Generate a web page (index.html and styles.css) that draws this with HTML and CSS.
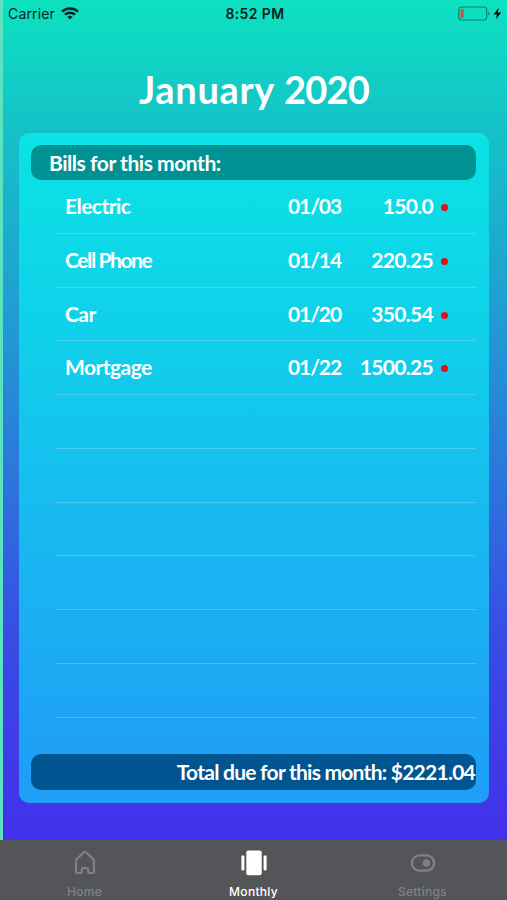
FILE: index.html
```html
<!DOCTYPE html>
<html lang="en">
<head>
    <meta charset="UTF-8">
    <meta name="viewport" content="width=device-width, initial-scale=1.0">
    <title>Monthly Bills</title>
    <link rel="stylesheet" href="styles.css">
</head>
<body>
    <div class="screen">
        <!-- Status bar -->
        <div class="status-bar">
            <div class="carrier">
                <span>Carrier</span>
                <svg width="18" height="13" viewBox="0 0 18 13" fill="none" stroke="#07251f" stroke-width="2.4">
                    <path d="M1 4.6C5.5 .4 12.5 .4 17 4.6"/>
                    <path d="M3.9 7.7C6.8 5 11.2 5 14.1 7.7"/>
                    <path d="M6.3 9.8C7.9 8.4 10.1 8.4 11.7 9.8L9 12.6Z" fill="#07251f" stroke="none"/>
                </svg>
            </div>
            <div class="time">8:52 PM</div>
            <div class="battery">
                <svg width="44" height="15" viewBox="0 0 44 15">
                    <rect x=".7" y="1" width="28" height="13" rx="3.2" fill="none" stroke="#087f72" stroke-width="1.2"/>
                    <rect x="2.6" y="3" width="3" height="9" rx=".8" fill="#d44e3c"/>
                    <path d="M30.3 5.3Q33 7.5 30.3 9.7Z" fill="#087f72"/>
                    <path d="M40.8 1.8L35.6 8.5H39L37.8 13.3L43.1 6.6H39.7Z" fill="#000"/>
                </svg>
            </div>
        </div>

        <h1 class="month"><span>January</span> <span class="year">2020</span></h1>

        <!-- Bills -->
        <div class="card">
            <h2 class="card-header">Bills for this month:</h2>
            <ul class="bills">
                <li class="bill"><span class="name">Electric</span><span class="date">01/03</span><span class="amount">150.0</span><i class="dot"></i></li>
                <li class="bill"><span class="name cell">Cell Phone</span><span class="date">01/14</span><span class="amount">220.25</span><i class="dot"></i></li>
                <li class="bill"><span class="name">Car</span><span class="date">01/20</span><span class="amount">350.54</span><i class="dot"></i></li>
                <li class="bill"><span class="name">Mortgage</span><span class="date">01/22</span><span class="amount">1500.25</span><i class="dot"></i></li>
                <li class="bill"></li>
                <li class="bill"></li>
                <li class="bill"></li>
                <li class="bill"></li>
                <li class="bill"></li>
                <li class="bill"></li>
            </ul>
            <div class="card-footer"><span>Total due for this month:</span> <span class="total">$2221.04</span></div>
        </div>
    </div>

    <!-- Tab bar -->
    <nav class="tab-bar">
        <a class="tab">
            <svg width="28" height="28" viewBox="0 0 28 28" fill="none" stroke="currentColor" stroke-width="2.2" stroke-linejoin="round">
                <path d="M5 11.5Q5 10.7 5.6 10.1L13 3.3Q14 2.5 15 3.3L22.4 10.1Q23 10.7 23 11.5V22.8Q23 24 21.8 24H18.2Q17.2 24 17.2 23V20.8Q17.2 18.8 14 18.8Q10.8 18.8 10.8 20.8V23Q10.8 24 9.8 24H6.2Q5 24 5 22.8Z"/>
            </svg>
            <span>Home</span>
        </a>
        <a class="tab active">
            <svg width="28" height="28" viewBox="0 0 28 28" fill="currentColor">
                <rect x="6.3" y="1.6" width="15.4" height="24.6" rx="2"/>
                <rect x="1.4" y="6.4" width="3" height="15" rx=".8"/>
                <rect x="23.6" y="6.4" width="3" height="15" rx=".8"/>
            </svg>
            <span>Monthly</span>
        </a>
        <a class="tab">
            <svg width="28" height="28" viewBox="0 0 28 28">
                <rect x="2.9" y="6.3" width="22.2" height="15.4" rx="7.7" fill="none" stroke="currentColor" stroke-width="2.3"/>
                <circle cx="17.5" cy="14" r="3.7" fill="currentColor"/>
            </svg>
            <span>Settings</span>
        </a>
    </nav>
</body>
</html>
```
FILE: styles.css
```css
* {
    margin: 0;
    padding: 0;
    box-sizing: border-box;
}

body {
    width: 507px;
    height: 900px;
    display: flex;
    flex-direction: column;
    overflow: hidden;
    background: #545558;
    font-family: Inter, "Liberation Sans", sans-serif;
}

.screen {
    height: 840px;
    padding: 0 18px 0 16px;
    border-left: 3px solid #5be2bf;
    background: linear-gradient(180deg, #0ce2c0 0%, #15c1c8 15.5%, #209fd2 36%, #2a7adb 55%, #384ce4 76%, #4038e9 92%, #4332ec 100%);
}

.status-bar {
    height: 27px;
    margin: 0 -13px 0 -11px;
    display: grid;
    grid-template-columns: 1fr auto 1fr;
    align-items: center;
    color: #07251f;
    font-size: 14px;
}

.carrier {
    display: flex;
    align-items: center;
    gap: 6px;
    letter-spacing: 0.15px;
}

.time {
    font-weight: 600;
    letter-spacing: 0.4px;
}

.battery {
    height: 15px;
    justify-self: end;
}

.month,
.card {
    font-family: "Marker Felt", Lato, sans-serif;
    font-weight: 700;
    color: #fff;
}

.month {
    height: 106px;
    padding-top: 38px;
    font-size: 38px;
    line-height: 48px;
    letter-spacing: 0.7px;
    text-align: center;
}

.year {
    letter-spacing: -0.8px;
}

.card {
    height: 670px;
    padding: 12px 13px 12px 12px;
    border-radius: 10px;
    background: linear-gradient(180deg, #0be3e5 0%, #10ceea 33%, #18baf0 57%, #1ea2f5 90%, #1f9df7 100%);
    font-size: 21px;
}

.card-header {
    height: 35px;
    padding-left: 18px;
    border-radius: 10px;
    background: #009292;
    font-size: 21px;
    line-height: 35px;
    letter-spacing: -0.45px;
}

.bills {
    height: 574px;
    list-style: none;
}

.bill {
    height: 53.75px;
    margin-left: 25px;
    padding: 0 28px 0 9px;
    display: flex;
    border-bottom: 1px solid rgba(180, 215, 240, 0.35);
    line-height: 51px;
}

.name {
    flex: 1;
    letter-spacing: -0.55px;
}

.name.cell {
    letter-spacing: -1.4px;
}

.date {
    width: 53px;
    letter-spacing: -1.1px;
    white-space: nowrap;
}

.amount {
    width: 92px;
    letter-spacing: -0.7px;
    text-align: right;
}

.dot {
    width: 7px;
    height: 7px;
    margin: 24px 0 0 8px;
    border-radius: 50%;
    background: #e80d16;
}

.card-footer {
    height: 36px;
    padding-right: 1px;
    border-radius: 10px;
    background: #00548f;
    line-height: 36px;
    letter-spacing: -0.75px;
    text-align: right;
}

.tab-bar {
    height: 60px;
    display: grid;
    grid-template-columns: repeat(3, 1fr);
    background: #545558;
}

.tab {
    padding-top: 9px;
    display: flex;
    flex-direction: column;
    align-items: center;
    gap: 7px;
    color: #808184;
    font-size: 12px;
    font-weight: 500;
    line-height: 15px;
    letter-spacing: 0.3px;
}

.tab.active {
    color: #fff;
}
```
